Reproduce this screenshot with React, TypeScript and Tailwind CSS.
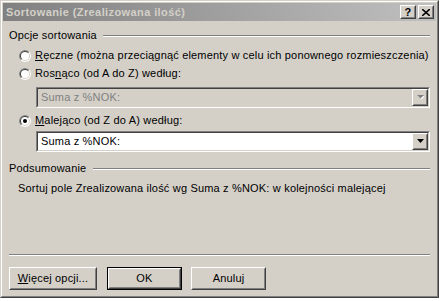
import React from "react";

function Raised({ className = "", children }: { className?: string; children?: React.ReactNode }) {
  return (
    <div className={`border border-t-white border-l-white border-r-[#404040] border-b-[#404040] bg-[#d4d0c8] ${className}`}>
      <div className="h-full w-full border border-t-[#d4d0c8] border-l-[#d4d0c8] border-r-[#808080] border-b-[#808080] flex items-center justify-center">
        {children}
      </div>
    </div>
  );
}

function Radio({ checked }: { checked?: boolean }) {
  return (
    <svg width="12" height="12" viewBox="0 0 12 12" className="shrink-0">
      <circle cx="6" cy="6" r="6" fill="#ffffff" />
      <path d="M1.757 10.243 A6 6 0 0 1 10.243 1.757 Z" fill="#808080" />
      <circle cx="6" cy="6" r="5" fill="#d4d0c8" />
      <path d="M2.464 9.536 A5 5 0 0 1 9.536 2.464 Z" fill="#404040" />
      <circle cx="6" cy="6" r="4" fill="#ffffff" />
      {checked && <circle cx="6" cy="6" r="2" fill="#000000" />}
    </svg>
  );
}

function Combo({ disabled, text }: { disabled?: boolean; text: string }) {
  return (
    <div className="h-[21px] ml-[27px] border border-t-[#808080] border-l-[#808080] border-r-white border-b-white">
      <div
        className={`h-full w-full border border-t-[#404040] border-l-[#404040] border-r-[#d4d0c8] border-b-[#d4d0c8] flex items-center ${
          disabled ? "bg-[#d4d0c8]" : "bg-white"
        }`}
      >
        <span className={`flex-1 pl-[3px] whitespace-nowrap ${disabled ? "text-[#808080]" : "text-black"}`}>{text}</span>
        <Raised className="w-[16px] h-[17px]">
          <svg width="7" height="5" viewBox="0 0 7 5">
            {disabled ? (
              <>
                <path d="M1 1 H8 L4.5 4.5 Z" fill="#ffffff" />
                <path d="M0 0 H7 L3.5 3.5 Z" fill="#808080" />
              </>
            ) : (
              <path d="M0 0 H7 L3.5 4 Z" fill="#000000" />
            )}
          </svg>
        </Raised>
      </div>
    </div>
  );
}

function GroupHeader({ label, gap }: { label: string; gap: string }) {
  return (
    <div className="h-[13px] flex items-center">
      <span className="whitespace-nowrap">{label}</span>
      <div className={`flex-1 h-[2px] border-t border-t-[#808080] border-b border-b-white ${gap}`} />
    </div>
  );
}

export default function App() {
  return (
    <div className="w-[440px] h-[301px] bg-white font-['Liberation_Sans',Arial,sans-serif] text-[11px] leading-[13px] tracking-[0.18px] text-black">
      <div className="w-[439px] h-[298px] border border-t-[#d4d0c8] border-l-[#d4d0c8] border-r-[#404040] border-b-[#404040]">
        <div className="h-full w-full border border-t-white border-l-white border-r-[#808080] border-b-[#808080] bg-[#d4d0c8] p-[1px] flex flex-col">
          {/* Title bar */}
          <div className="h-[18px] bg-linear-to-r from-[#808080] to-[#c0c0c0] flex items-center pl-[3px]">
            <span className="flex-1 font-bold tracking-[0.4px] whitespace-nowrap text-[#d4d0c8]">Sortowanie (Zrealizowana ilość)</span>
            <div className="flex gap-[2px] mr-[2px]">
              <Raised className="w-[16px] h-[14px]">
                <span className="font-bold text-[11px] leading-[10px]">?</span>
              </Raised>
              <Raised className="w-[16px] h-[14px]">
                <svg width="8" height="7" viewBox="0 0 8 7">
                  <path d="M0 0 L8 7 M8 0 L0 7" stroke="#000" strokeWidth="1.6" />
                </svg>
              </Raised>
            </div>
          </div>

          {/* Content */}
          <div className="pl-[6px] pr-[6px] flex flex-col">
            <div className="mt-[8px]">
              <GroupHeader label="Opcje sortowania" gap="ml-[6px]" />
            </div>

            <div className="mt-[7px] h-[13px] flex items-center ml-[10px] gap-[4px]">
              <Radio />
              <span className="whitespace-nowrap">
                <span className="underline">R</span>ęczne (można przeciągnąć elementy w celu ich ponownego rozmieszczenia)
              </span>
            </div>

            <div className="mt-[5px] h-[13px] flex items-center ml-[10px] gap-[4px]">
              <Radio />
              <span className="whitespace-nowrap">
                Ros<span className="underline">n</span>ąco (od A do Z) według:
              </span>
            </div>

            <div className="mt-[7px]">
              <Combo disabled text="Suma z %NOK:" />
            </div>

            <div className="mt-[6px] h-[13px] flex items-center ml-[10px] gap-[4px]">
              <Radio checked />
              <span className="whitespace-nowrap">
                <span className="underline">M</span>alejąco (od Z do A) według:
              </span>
            </div>

            <div className="mt-[4px]">
              <Combo text="Suma z %NOK:" />
            </div>

            <div className="mt-[10px]">
              <GroupHeader label="Podsumowanie" gap="ml-[7px]" />
            </div>

            <div className="mt-[7px] h-[13px] flex items-center ml-[9px] whitespace-nowrap">
              Sortuj pole Zrealizowana ilość wg Suma z %NOK: w kolejności malejącej
            </div>

            <div className="mt-[59px] h-[2px] border-t border-t-[#808080] border-b border-b-white" />

            <div className="mt-[11px] flex items-center">
              <Raised className="w-[88px] h-[23px]">
                <span className="whitespace-nowrap">
                  <span className="underline">W</span>ięcej opcji...
                </span>
              </Raised>
              <div className="ml-[10px] w-[75px] h-[23px] border border-black">
                <Raised className="w-full h-full">
                  <span>OK</span>
                </Raised>
              </div>
              <Raised className="ml-[9px] w-[75px] h-[23px]">
                <span>Anuluj</span>
              </Raised>
            </div>
          </div>
        </div>
      </div>
    </div>
  );
}
